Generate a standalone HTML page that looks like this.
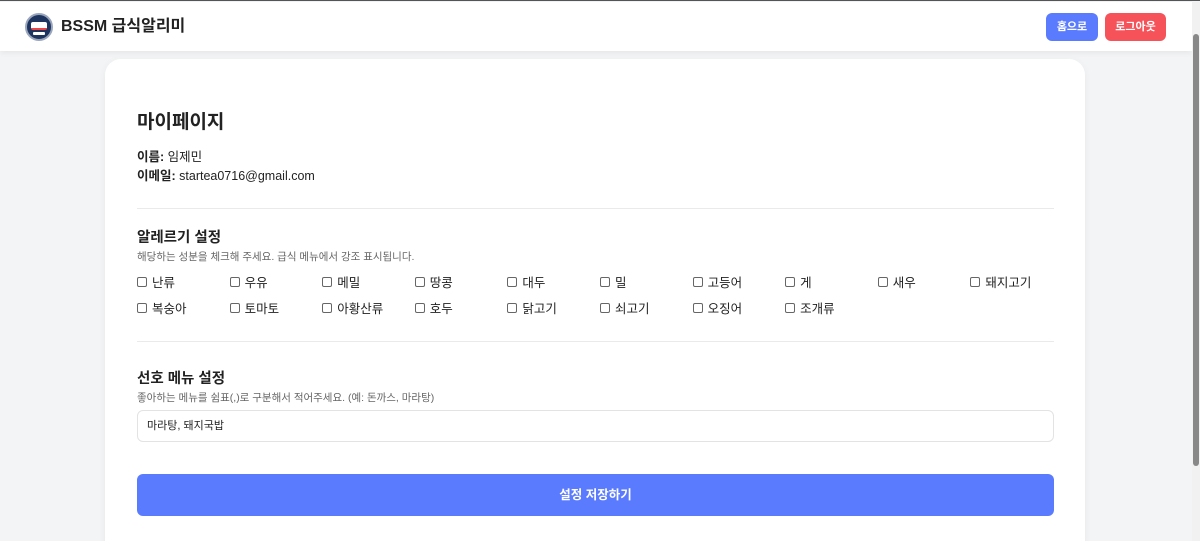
<!DOCTYPE html>
<html style="width:1200px;height:541px;overflow:hidden"><head><meta charset="utf-8"><style>
*{box-sizing:border-box;margin:0;padding:0}
body{width:1200px;height:541px;overflow:hidden;background:#f3f4f6;font-family:"Liberation Sans","Noto Sans CJK KR",sans-serif;color:#222;position:relative;border-top:1px solid #555}
.hdr{position:absolute;top:1px;left:0;width:1192px;height:49px;background:#fff;box-shadow:0 2px 6px rgba(0,0,0,.06)}
.logo{position:absolute;left:25px;top:11px;width:28px;height:28px;border-radius:50%;background:#1e3560;border:2px solid #9aa6bb}
.logo i{position:absolute;left:4px;top:7px;width:16px;height:8px;background:#fff;border-radius:2px;border-bottom:2px solid #e44}
.logo b{position:absolute;left:6px;top:17px;width:12px;height:3px;background:#fff;border-radius:1px}
.title{position:absolute;left:61px;top:16px;font-size:16px;font-weight:bold;color:#222;line-height:18px}
.btn{position:absolute;top:11px;height:28px;border-radius:6px;color:#fff;font-size:11px;font-weight:bold;text-align:center;line-height:28px}
.sb{position:absolute;right:0;top:1px;width:8px;height:540px;background:#f1f1f1}
.sb i{position:absolute;left:1px;top:32px;width:6px;height:432px;background:#888;border-radius:3px}
.card{position:absolute;left:105px;top:58px;width:980px;height:500px;background:#fff;border-radius:16px;box-shadow:0 2px 8px rgba(0,0,0,.05)}
.c{position:absolute;left:32px;width:917px}
h1{font-size:19px;font-weight:bold}
h2{font-size:14.5px;font-weight:bold}
.sub{font-size:10.5px;color:#666;margin-top:2px}
.info{font-size:12.5px;line-height:19px}
hr{border:0;border-top:1px solid #eaeaea;position:absolute;left:32px;width:917px}
.grid{display:grid;grid-template-columns:repeat(10,92.6px);row-gap:11px;font-size:12.5px}
.grid span{display:flex;align-items:center;height:15px}
.grid span:before{content:"";width:8px;height:8px;border:1px solid #666;border-radius:2px;margin-right:5px}
.inp{height:32px;border:1px solid #e3e3e3;border-radius:6px;font-size:11px;line-height:30px;padding-left:9px}
.save{height:42px;background:#5b7bfe;border-radius:6px;color:#fff;font-weight:bold;font-size:12.5px;text-align:center;line-height:42px}
</style></head><body>
<div class="hdr"><div class="logo"><i></i><b></b></div><div class="title">BSSM 급식알리미</div>
<div class="btn" style="left:1046px;width:52px;background:#5b7bfe">홈으로</div>
<div class="btn" style="left:1105px;width:61px;background:#f5525a">로그아웃</div></div>
<div class="sb"><i></i></div>
<div class="card">
<div class="c" style="top:48px"><h1>마이페이지</h1></div>
<div class="c info" style="top:89px"><b>이름:</b> 임제민<br><b>이메일:</b> startea0716@gmail.com</div>
<hr style="top:149px">
<div class="c" style="top:167px"><h2>알레르기 설정</h2><div class="sub">해당하는 성분을 체크해 주세요. 급식 메뉴에서 강조 표시됩니다.</div></div>
<div class="c grid" style="top:215px"><span>난류</span><span>우유</span><span>메밀</span><span>땅콩</span><span>대두</span><span>밀</span><span>고등어</span><span>게</span><span>새우</span><span>돼지고기</span><span>복숭아</span><span>토마토</span><span>아황산류</span><span>호두</span><span>닭고기</span><span>쇠고기</span><span>오징어</span><span>조개류</span></div>
<hr style="top:282px">
<div class="c" style="top:308px"><h2>선호 메뉴 설정</h2><div class="sub">좋아하는 메뉴를 쉼표(,)로 구분해서 적어주세요. (예: 돈까스, 마라탕)</div></div>
<div class="c inp" style="top:351px">마라탕, 돼지국밥</div>
<div class="c save" style="top:415px">설정 저장하기</div>
</div>
</body></html>
